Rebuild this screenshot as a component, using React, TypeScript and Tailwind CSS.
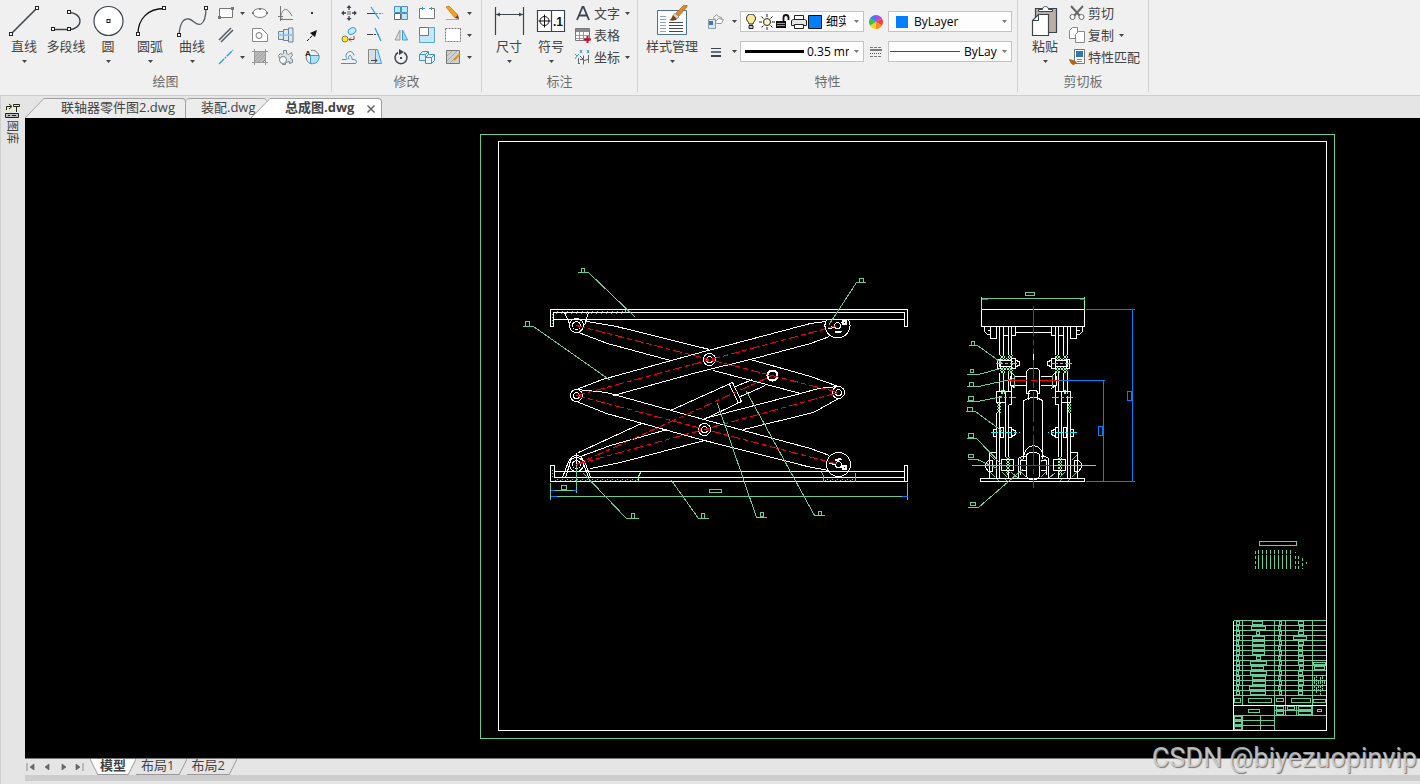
import type { ReactNode } from "react";

const INK = "#3c4450";
const BLUE = "#3a9bdc";
const GREEN = "#66cc99";

function Caret() {
  return (
    <svg width="5" height="3" viewBox="0 0 5 3" className="shrink-0" aria-hidden="true">
      <path d="M0 0h5L2.5 3z" fill="#444" />
    </svg>
  );
}

function Icon({ size = 16, children }: { size?: number; children: ReactNode }) {
  return (
    <svg
      width={size}
      height={size}
      viewBox={`0 0 ${size} ${size}`}
      fill="none"
      stroke={INK}
      className="shrink-0"
      aria-hidden="true"
    >
      {children}
    </svg>
  );
}

function Grip({ x, y }: { x: number; y: number }) {
  return <rect x={x - 1.5} y={y - 1.5} width="3" height="3" fill="#fff" stroke="#222" />;
}

const big = {
  line: (
    <Icon size={32}>
      <path d="M3.5 28.5l25-25" strokeWidth="1.6" />
      <Grip x={3} y={29} />
      <Grip x={29} y={3} />
    </Icon>
  ),
  polyline: (
    <Icon size={32}>
      <path d="M3 24.5h16c6 0 11-3.5 11-8.500s-5-8.500-11-8.500" strokeWidth="1.3" />
      <Grip x={3} y={24} />
      <Grip x={19} y={24} />
      <Grip x={19} y={7} />
    </Icon>
  ),
  circle: (
    <Icon size={32}>
      <circle cx="16.5" cy="16" r="14.5" fill="#fff" strokeWidth="1.2" />
      <Grip x={16.5} y={16} />
    </Icon>
  ),
  arc: (
    <Icon size={32}>
      <path d="M4 29C4 14 14 3.5 30 3.5" stroke="#111" strokeWidth="1.3" />
      <Grip x={4} y={29} />
      <Grip x={30} y={3} />
    </Icon>
  ),
  spline: (
    <Icon size={32}>
      <path d="M3 30C4 17 8 13 13 14c5 1 7 7 12 5 4-2 5-9 5-17" stroke="#555b66" strokeWidth="1.3" />
      <Grip x={3} y={30} />
      <Grip x={30} y={3} />
    </Icon>
  ),
  dimension: (
    <Icon size={32}>
      <path d="M2.5 2v28M30.5 2v28M3 9.5h27" strokeWidth="1.2" />
      <path d="M3 9.5l4-2v4zM30 9.5l-4-2v4z" fill={INK} stroke="none" />
    </Icon>
  ),
  symbol: (
    <Icon size={32}>
      <path d="M2.5 5.5h27v21h-27zM16.5 5.5v21" fill="#fff" strokeWidth="1.2" />
      <circle cx="9.5" cy="16" r="4.5" stroke="#111" />
      <path d="M3.5 16h12M9.5 9.5v13" stroke="#111" />
      <text x="18" y="21" fontSize="12" fontWeight="700" fontFamily="Liberation Sans" fill="#111" stroke="none">
        .1
      </text>
    </Icon>
  ),
  styles: (
    <Icon size={32}>
      <path d="M1.5 5.5h29v24h-29z" fill="#fff" stroke="#4f7190" />
      <path d="M4 11.5h6M4 14.5h6M4 17.5h6M4 20.5h6M4 23.5h6M4 26.5h6" stroke="#8fa5b8" />
      <path d="M13 17.5h14M13 20.5h14M13 23.5h14M13 26.5h14" stroke="#3e4c5a" />
      <path d="M28 0h3v2L22 12l-3-3z" fill="#d98a2b" stroke="#a0601c" strokeWidth=".6" />
      <path d="M19 8l4 4-3 2-3-3z" fill="#d5d5d5" stroke="#777" strokeWidth=".6" />
      <path d="M17 10l4 4c-2 2-5 2-8 1 2 0 3-3 4-5z" fill="#7a4517" stroke="none" />
    </Icon>
  ),
  paste: (
    <Icon size={32}>
      <path d="M6.5 3.5h21v24h-21z" fill="#b7b0a3" strokeWidth="1.2" />
      <path d="M9.5 4.5h4c0-4 6-4 6 0h4v2h-14z" fill="#fff" />
      <path d="M9.5 9.5h10v21h-16v-15z" fill="#fff" strokeWidth="1.2" />
      <path d="M9.5 9.5v6h-6" />
    </Icon>
  ),
};

const draw = {
  rect: (
    <Icon>
      <path d="M1.5 3.5h13v9h-13z" fill="#fff" stroke="#777" />
      <path d="M0 11h3v3H0zM13 2h3v3h-3z" fill="#777" stroke="none" />
    </Icon>
  ),
  ellipse: (
    <Icon>
      <ellipse cx="8" cy="8" rx="7" ry="4.5" fill="#fff" stroke="#777" />
      <path d="M0 7h2v2H0zM14 7h2v2h-2zM7 3h2v2H7z" fill="#777" stroke="none" />
    </Icon>
  ),
  plot: (
    <Icon>
      <path d="M2.5 1v13.5H15M0 11.5h5" stroke="#777" />
      <path d="M2.5 12C5 2 9 2 14 11" stroke="#777" />
      <path d="M2.5 14v2M2.5 12l3 3" stroke="#777" />
    </Icon>
  ),
  point: (
    <Icon>
      <path d="M7 7h2v2H7z" fill="#333" stroke="none" />
    </Icon>
  ),
  parallel: (
    <Icon>
      <path d="M1 13L13 1M3 15L15 3" stroke="#555b66" strokeWidth="1.5" />
    </Icon>
  ),
  contour: (
    <Icon>
      <path d="M.5 1.5h9l6 6v7H.5z" fill="#fff" stroke="#888" />
      <circle cx="7" cy="8.5" r="3" stroke="#777" />
    </Icon>
  ),
  shaft: (
    <Icon>
      <path d="M.5 4.5h5v8h-5zM5.5 2.5h5v11h-5zM10.5 1h4.5v14h-4.5z" fill="#dfe6ee" stroke="#6e8296" />
      <path d="M0 8h16" stroke="#7cc4f0" strokeWidth="1.5" />
    </Icon>
  ),
  arrow: (
    <Icon>
      <path d="M3 14l6-6" stroke="#111" strokeDasharray="3 1" />
      <path d="M13 3l-2 7-5-4z" fill="#111" stroke="none" />
    </Icon>
  ),
  center: (
    <Icon>
      <path d="M1 15L15 1" stroke="#1e9fe0" strokeWidth="1.3" strokeDasharray="7 1 2 1" />
    </Icon>
  ),
  hatch: (
    <Icon>
      <path d="M2.5 2.5h11v8l-3 3h-8z" fill="#b9b9b9" stroke="#777" />
      <path d="M0 2.5h16M2.5 0v16M13.5 0v16M0 13.5h16" stroke="#999" />
      <path d="M3 8l5-5M3 12l9-9M6 13l7-7" stroke="#a4a4a4" />
    </Icon>
  ),
  gear: (
    <Icon>
      <path
        d="M1.5 9l-1-2.500 2-2 2 1 1-1v-3h3v3l2 1 3-2 1 3-2 2v1l2 1v3l-3 1v-2l-4 1v2h-3z"
        fill="#dde1e6"
        stroke="#7c8794"
      />
      <circle cx="5" cy="11" r="3.5" fill="#fff" stroke="#7c8794" />
    </Icon>
  ),
  region: (
    <Icon>
      <path d="M2.5 6a7 7 0 0 0 5 9" stroke="#777" />
      <path d="M6.5 6.5h8.500c1 5-3 9-8.500 8z" fill="#aee0f8" stroke={BLUE} />
      <text x="1" y="7" fontSize="8" fontWeight="700" fontFamily="Liberation Sans" fill="#222" stroke="none">
        A
      </text>
      <path d="M7 1.5c4-1 7 2 8 5" stroke="#777" />
    </Icon>
  ),
};

const edit = {
  move: (
    <Icon>
      <path d="M6 6h4v4H6z" fill="#aaa" stroke="none" />
      <path d="M8 2v3M8 11v3M2 8h3M11 8h3" strokeWidth="1.3" />
      <path d="M8 0l2.5 3h-5zM8 16l2.5-3h-5zM0 8l3-2.5v5zM16 8l-3-2.5v5z" fill={INK} stroke="none" />
    </Icon>
  ),
  trim: (
    <Icon>
      <path d="M0 8.5h8" />
      <path d="M9 8.5h7" stroke={BLUE} strokeDasharray="2 1" />
      <path d="M4 2l8 12" stroke={BLUE} strokeWidth="1.3" />
    </Icon>
  ),
  array: (
    <Icon>
      <path d="M1.5 1.5h6v6h-6zM8.5 1.5h6v6h-6zM8.5 8.5h6v6h-6z" fill="#bfe6fa" stroke="#4793bf" />
      <path d="M1.5 8.5h6v6h-6z" fill="#fff" stroke="#666" />
    </Icon>
  ),
  stretch: (
    <Icon>
      <path d="M3 3.5H.5v10h15v-10H13" fill="#fff" stroke="#777" />
      <path d="M3.5 2v3M12.5 2v3M3 3.500h3M10 3.500h3" stroke={BLUE} />
    </Icon>
  ),
  erase: (
    <Icon>
      <path d="M1 2l3-1 9 9-3 3z" fill="#f0a31c" stroke="#b8700f" strokeWidth=".7" />
      <path d="M10 13l3-3 1 4z" fill="#6b3a1b" stroke="none" />
      <path d="M1 14.5h13" stroke="#b9a48a" />
    </Icon>
  ),
  copy: (
    <Icon>
      <ellipse cx="11" cy="4" rx="4" ry="3" fill="#c9eafc" stroke={BLUE} transform="rotate(-30 11 4)" />
      <path d="M13 9v3.500H8M10 10.500l-2 2 2 2" stroke="#a33" />
      <circle cx="4" cy="12" r="3" fill="#ffee00" stroke="#777" />
    </Icon>
  ),
  extend: (
    <Icon>
      <path d="M0 7.5h4M10 7.5h2" />
      <path d="M4 7.5h6" strokeDasharray="2 1" />
      <path d="M8 1l6 13" stroke={BLUE} strokeWidth="1.3" />
    </Icon>
  ),
  mirror: (
    <Icon>
      <path d="M7 3v10H2z" fill="#ddd" stroke="#999" />
      <path d="M9.5 3v10h5z" fill="#a9dcf7" stroke={BLUE} />
    </Icon>
  ),
  scale: (
    <Icon>
      <path d="M.5.5h15v15H.5z" fill="#c2e7fa" stroke="#5aa6cf" />
      <path d="M.5.5h9v8h-9z" fill="#fff" stroke="#777" />
    </Icon>
  ),
  frame: (
    <Icon>
      <path d="M.5 1.5h15v13H.5z" fill="#fff" stroke="#777" strokeDasharray="2 1" />
    </Icon>
  ),
  offset: (
    <Icon>
      <path d="M1 10.5h4c2 0 0-2 0-4s2-4 4-4 4 2 4 4" stroke="#4793bf" />
      <path d="M0 14.5h14c2 0 2-4-1-4h-2c0-3-1-4-2-4s-2 1-1 4" stroke="#4793bf" />
    </Icon>
  ),
  chamfer: (
    <Icon>
      <path d="M1.5.5h7v14h-7z" fill="#ddd" stroke="#888" />
      <path d="M8.5.5h2l4 14h-6z" fill="#c2e7fa" stroke={BLUE} />
      <path d="M4 11.5h6l-2-2m2 2l-2 2" />
    </Icon>
  ),
  rotate: (
    <Icon>
      <path d="M5 3.5a6 6 0 1 0 6 0" strokeWidth="1.5" />
      <path d="M6 0l5 3-5 3z" fill={INK} stroke="none" />
      <path d="M7 8h2v2H7z" fill={INK} stroke="none" />
    </Icon>
  ),
  block: (
    <Icon>
      <path d="M.5 5.5l3-3h6v6l-3 3h-6zM.5 5.500h6v6m0-6l3-3" fill="#d8effb" stroke="#4793bf" />
      <path d="M6.5 8.5l3-3h6v6l-3 3h-6z" fill="#e9f6fd" stroke="#4793bf" />
      <path d="M6.5 8.5h6v6m0-6l3-3" stroke="#4793bf" />
    </Icon>
  ),
  edhatch: (
    <Icon>
      <path d="M1.5 1.5h13v13h-13z" fill="#d0d0d0" stroke="#777" />
      <path d="M2 7l5-5M2 12l10-10M5 14l9-9" stroke="#aaa" />
      <path d="M15 5l-6 6" stroke="#d9962b" strokeWidth="2" />
    </Icon>
  ),
};

const annotate = {
  text: (
    <Icon>
      <path d="M2 15L7.500 2h1L14 15M4 10.5h8" strokeWidth="1.8" />
    </Icon>
  ),
  table: (
    <Icon>
      <path d="M.5 1.5h14v12H.5z" fill="#fff" stroke="#777" />
      <path d="M1 2h13v3H1z" fill="#8a8a8a" stroke="none" />
      <path d="M.5 8.5h14M.5 11.5h14M4.5 5v8M8.5 5v8" stroke="#999" />
      <path d="M12.5 9v7M9 12.5h7" stroke="#c8102e" strokeWidth="2" />
    </Icon>
  ),
  coord: (
    <Icon>
      <path d="M3.5 9v6M5 10.5h3M8.5 6.5v9M13.5 6v8M8 12l6-2M3 14.500h2M5 7l3 3" stroke="#666" />
      <path d="M5 1l2 3m0-3L5 4M12 1l2 3m0-3l-2 3M0 5l2 2-2 3M2 7l2-2" stroke={BLUE} />
    </Icon>
  ),
};

const clip = {
  cut: (
    <Icon>
      <path d="M2 1l9 10M14 1L5 11" stroke="#666" strokeWidth="2" />
      <circle cx="3.5" cy="12" r="2.5" fill="#fff" stroke="#666" />
      <circle cx="12.5" cy="12" r="2.5" fill="#fff" stroke="#666" />
    </Icon>
  ),
  copy: (
    <Icon>
      <path d="M.5 3.5l3-3h5v11h-8z" fill="#fff" stroke="#888" />
      <path d="M6.5 7.5l3-3h6v11h-9z" fill="#fff" stroke="#888" />
    </Icon>
  ),
  match: (
    <Icon>
      <path d="M5.5.5h10v14h-10z" fill="#fff" stroke="#777" />
      <path d="M7 2h7v6H7z" fill="#2f77b5" stroke="none" />
      <path d="M8 10.5h5M8 12.5h5" stroke="#888" />
      <path d="M0 10l4 1 4 2-3 3c-2 0-4-2-5-6z" fill="#b0651d" stroke="none" />
    </Icon>
  ),
};

function BigButton({ icon, label, caret = true, wide = false }: { icon: ReactNode; label: string; caret?: boolean; wide?: boolean }) {
  return (
    <button type="button" className={`flex shrink-0 flex-col items-center pt-[5px] ${wide ? "w-[58px]" : "w-[42px]"}`}>
      {icon}
      <span className="h-5 whitespace-nowrap leading-[18px]">{label}</span>
      <span className="flex h-2 items-center">{caret && <Caret />}</span>
    </button>
  );
}

function Tool({ icon, label, caret = false, start = false }: { icon: ReactNode; label: string; caret?: boolean; start?: boolean }) {
  return (
    <button
      type="button"
      aria-label={label}
      className={`flex h-[22px] items-center gap-[6px] ${start ? "justify-start pl-[5px]" : "justify-center"}`}
    >
      {icon}
      {caret && <Caret />}
    </button>
  );
}

function RowButton({ icon, label, caret = false }: { icon: ReactNode; label: string; caret?: boolean }) {
  return (
    <button type="button" className="flex h-[22px] items-center gap-[3px] pl-[3px]">
      {icon}
      <span className="whitespace-nowrap pb-px leading-4">{label}</span>
      {caret && <span className="pl-[2px]"><Caret /></span>}
    </button>
  );
}

function Group({ title, className, children }: { title: string; className: string; children: ReactNode }) {
  return (
    <section className="flex shrink-0 flex-col border-r border-[#d2d2d2]">
      <div className={`flex h-[71px] items-start ${className}`}>{children}</div>
      <h2 className="h-5 text-center leading-5 text-[#6d6d6d]">{title}</h2>
    </section>
  );
}

function Picker({ label, value, before, grow = "flex-1" }: { label: string; value: string; before: ReactNode; grow?: string }) {
  return (
    <div className="flex h-[21px] w-[124px] items-center border border-[#c3c3c3] bg-[#fdfdfd] text-xs text-black">
      {before}
      <select aria-label={label} defaultValue={value} className={`min-w-0 appearance-none overflow-hidden bg-transparent ${grow}`}>
        <option>{value}</option>
      </select>
      <span className="ml-auto px-1 opacity-70">
        <Caret />
      </span>
    </div>
  );
}

function Ribbon() {
  return (
    <header className="flex h-24 overflow-hidden border-b border-[#cdcdcd] bg-[#f0f0f0] pb-[3px]">
      <Group title="绘图" className="w-[331px] pl-[3px]">
        <BigButton icon={big.line} label="直线" />
        <BigButton icon={big.polyline} label="多段线" caret={false} />
        <BigButton icon={big.circle} label="圆" />
        <BigButton icon={big.arc} label="圆弧" />
        <BigButton icon={big.spline} label="曲线" />
        <div className="grid grid-cols-[34px_26px_26px_26px] pt-[2px]">
          <Tool icon={draw.rect} label="矩形" caret start />
          <Tool icon={draw.ellipse} label="椭圆" />
          <Tool icon={draw.plot} label="公式曲线" />
          <Tool icon={draw.point} label="点" />
          <Tool icon={draw.parallel} label="平行线" start />
          <Tool icon={draw.contour} label="轮廓" />
          <Tool icon={draw.shaft} label="轴" />
          <Tool icon={draw.arrow} label="箭头" />
          <Tool icon={draw.center} label="中心线" caret start />
          <Tool icon={draw.hatch} label="剖面线" />
          <Tool icon={draw.gear} label="齿形" />
          <Tool icon={draw.region} label="局部放大" />
        </div>
      </Group>

      <Group title="修改" className="w-[149px] pl-1">
        <div className="grid grid-cols-[26px_26px_26px_26px_34px] pt-[2px]">
          <Tool icon={edit.move} label="平移" />
          <Tool icon={edit.trim} label="裁剪" />
          <Tool icon={edit.array} label="阵列" />
          <Tool icon={edit.stretch} label="拉伸" />
          <Tool icon={edit.erase} label="删除" caret start />
          <Tool icon={edit.copy} label="平移复制" />
          <Tool icon={edit.extend} label="延伸" />
          <Tool icon={edit.mirror} label="镜像" />
          <Tool icon={edit.scale} label="缩放" />
          <Tool icon={edit.frame} label="分解" caret start />
          <Tool icon={edit.offset} label="等距线" />
          <Tool icon={edit.chamfer} label="过渡" />
          <Tool icon={edit.rotate} label="旋转" />
          <Tool icon={edit.block} label="块" />
          <Tool icon={edit.edhatch} label="编辑填充" caret start />
        </div>
      </Group>

      <Group title="标注" className="w-[155px] pl-[6px]">
        <BigButton icon={big.dimension} label="尺寸" />
        <BigButton icon={big.symbol} label="符号" />
        <div className="flex flex-col pt-[2px]">
          <RowButton icon={annotate.text} label="文字" caret />
          <RowButton icon={annotate.table} label="表格" />
          <RowButton icon={annotate.coord} label="坐标" caret />
        </div>
      </Group>

      <Group title="特性" className="w-[379px] pl-[5px]">
        <BigButton icon={big.styles} label="样式管理" wide />
        <div className="grid grid-cols-[39px_124px_24px_124px] items-center gap-y-[9px] pt-[11px]">
          <button type="button" aria-label="图层" className="flex items-center gap-2 pl-[7px]">
            <Icon>
              <path d="M5.5 3.5l3-3 2 2 3 1-1 4h-5z" fill="#eee" stroke="#999" />
              <path d="M7.5 7.5l3-3 5 1-2 4h-5z" fill="#fff" stroke="#999" />
              <path d="M.5 5.5h7v9h-7z" fill="#dfe6ec" stroke="#8a9aaa" />
              <path d="M1 7h4v4H1z" fill="#3f79ad" stroke="none" />
            </Icon>
            <Caret />
          </button>
          <Picker
            label="图层"
            value="细实线"
            grow="ml-[3px] w-5"
            before={
              <span className="flex pl-[2px]">
                <Icon>
                  <path d="M6 10c0-2-2.5-3-2.5-5.5a4.5 4.5 0 0 1 9 0C12.5 7 10 8 10 10z" fill="#ffe9a0" stroke="#222" />
                  <path d="M6 11.5h4v3H6z" fill="#ccc" stroke="#222" />
                </Icon>
                <Icon>
                  <circle cx="8" cy="8" r="3.5" fill="#fff3cc" stroke="#222" />
                  <path d="M8 0v3M8 13v3M0 8h3M13 8h3M2.5 2.5l2 2M11.5 11.5l2 2M2.5 13.5l2-2M11.5 4.5l2-2" stroke="#222" />
                </Icon>
                <Icon>
                  <path d="M8.5 7V3.5a2.5 2.5 0 0 1 5 0V6" stroke="#111" strokeWidth="1.8" />
                  <path d="M1 7h10v7H1z" fill="#111" stroke="none" />
                  <path d="M2 9.5h8M2 11.5h8" stroke="#b8a800" />
                </Icon>
                <Icon>
                  <path d="M3.5 6V1.5h9V6" fill="#fff" stroke="#222" />
                  <path d="M.5 6.5l2-1h11l2 1v5H.5z" fill="#e6e6e6" stroke="#222" />
                  <path d="M3.5 10.5h9v4h-9z" fill="#fff" stroke="#222" />
                </Icon>
                <Icon>
                  <path d="M1.5 1.5h13v13h-13z" fill="#0080ff" stroke="#111" />
                </Icon>
              </span>
            }
          />
          <span className="flex justify-center">
            <Icon size={14}>
              <g stroke="none">
                <path d="M7 7V0a7 7 0 0 1 6 3.5z" fill="#b14be8" />
                <path d="M7 7l6-3.5a7 7 0 0 1 0 7z" fill="#f0443a" />
                <path d="M7 7l6 3.5A7 7 0 0 1 7 14z" fill="#f58f1e" />
                <path d="M7 7v7a7 7 0 0 1-6-3.5z" fill="#f2d21c" />
                <path d="M7 7l-6 3.5a7 7 0 0 1 0-7z" fill="#3fbf3f" />
                <path d="M7 7L1 3.5A7 7 0 0 1 7 0z" fill="#3d7fe8" />
              </g>
            </Icon>
          </span>
          <Picker label="颜色" value="ByLayer" before={<span className="mr-[6px] ml-[7px] size-3 shrink-0 bg-[#0080ff]" />} />
          <button type="button" aria-label="线宽" className="flex items-center gap-2 pl-[7px]">
            <Icon>
              <path d="M3 4.5h10" />
              <path d="M3 8h10" strokeWidth="1.5" />
              <path d="M3 12h10" strokeWidth="2" />
            </Icon>
            <Caret />
          </button>
          <Picker
            label="线宽"
            value="0.35 mm"
            grow="w-[42px]"
            before={<span className="mr-[3px] ml-1 h-[3px] w-[59px] shrink-0 bg-black" />}
          />
          <span className="flex justify-center">
            <Icon size={14}>
              <path d="M1 2.5h12M1 11.5h12" strokeDasharray="3 1" stroke="#777" />
              <path d="M1 5h12" stroke="#555" strokeWidth="1.5" />
              <path d="M1 8.5h12" stroke="#555" strokeDasharray="1 1" />
            </Icon>
          </span>
          <Picker
            label="线型"
            value="ByLayer"
            grow="w-[33px]"
            before={<span className="mr-1 ml-px h-px w-[70px] shrink-0 bg-[#ff0000]" />}
          />
        </div>
      </Group>

      <Group title="剪切板" className="w-[130px] pl-[6px]">
        <BigButton icon={big.paste} label="粘贴" />
        <div className="flex flex-col pt-[2px]">
          <RowButton icon={clip.cut} label="剪切" />
          <RowButton icon={clip.copy} label="复制" caret />
          <RowButton icon={clip.match} label="特性匹配" />
        </div>
      </Group>
    </header>
  );
}

function Slope({ fill }: { fill: string }) {
  return (
    <svg width="20" height="20" viewBox="0 0 20 20" className="shrink-0" aria-hidden="true">
      <path d="M0 20L19 .5h1V20z" fill={fill} />
      <path d="M0 20L19 .5h1" fill="none" stroke="#a0a0a0" />
    </svg>
  );
}

function FileTabs() {
  return (
    <nav className="flex h-[22px] items-end overflow-hidden">
      <button type="button" className="flex h-5 shrink-0">
        <Slope fill="#ececec" />
        <span className="h-5 w-[141px] rounded-tr-sm border-t border-r border-[#a0a0a0] bg-[#ececec] pl-4 text-left leading-4">
          联轴器零件图2.dwg
        </span>
      </button>
      <button
        type="button"
        className="flex h-5 w-[81px] shrink-0 rounded-t-sm border-t border-[#a0a0a0] bg-[#ececec] pl-[15px] leading-4"
      >
        装配.dwg
      </button>
      <div className="relative -ml-4 flex h-5 shrink-0">
        <Slope fill="#ffffff" />
        <div className="flex h-5 w-[111px] items-start justify-between rounded-tr-sm border-t border-r border-[#a0a0a0] bg-white pr-[6px] pl-[14px]">
          <button type="button" className="font-bold leading-4">总成图.dwg</button>
          <button type="button" aria-label="关闭" className="pt-[6px]">
            <svg width="8" height="8" viewBox="0 0 8 8" stroke="#666" strokeWidth="1.5" aria-hidden="true">
              <path d="M.5.5l7 7M7.5.5l-7 7" />
            </svg>
          </button>
        </div>
      </div>
    </nav>
  );
}

type Box = [number, number, number, number];

// leader polyline + the little balloon number drawn as a box
const leaders: { d: string; box: Box }[] = [
  { d: "M577 272h11L635 317", box: [581, 268, 3, 4] },
  { d: "M522 326h11L610 380", box: [525, 321, 4, 5] },
  { d: "M583 473L626 518h12", box: [631, 513, 3, 5] },
  { d: "M671 480L698 518h10", box: [701, 513, 3, 5] },
  { d: "M717 403L756 517h10", box: [760, 512, 3, 4] },
  { d: "M746 391L814 515h10", box: [818, 511, 3, 4] },
  { d: "M828 325L856 282h9", box: [859, 278, 4, 4] },
  { d: "M968 345h9L1002 363", box: [971, 341, 3, 4] },
  { d: "M966 374h12L1000 368", box: [970, 369, 3, 3] },
  { d: "M966 386h12L1014 378", box: [969, 382, 4, 4] },
  { d: "M966 401h11L1002 396", box: [968, 396, 5, 4] },
  { d: "M965 411h10L1002 431", box: [967, 407, 5, 4] },
  { d: "M966 438h10L1003 466", box: [968, 433, 5, 4] },
  { d: "M967 459h10L997 468", box: [968, 454, 5, 3] },
  { d: "M967 507h11L1023 468", box: [970, 502, 5, 3] },
];

function Leaders() {
  return (
    <g stroke={GREEN}>
      {leaders.map(({ d, box: [x, y, w, h] }) => (
        <g key={d}>
          <path d={d} />
          <rect x={x} y={y} width={w} height={h} />
        </g>
      ))}
    </g>
  );
}

function FrontView() {
  const pins: [number, number, number][] = [
    [576, 325, 7],
    [576, 395, 6],
    [709, 359, 6],
    [704, 429, 6],
    [838, 392, 6],
    [576, 464, 7],
  ];
  return (
    <g>
      <g fill="url(#slant)">
        <rect x="553" y="310" width="72" height="3" />
        <rect x="553" y="478" width="85" height="3" />
        <rect x="823" y="478" width="32" height="3" />
        <rect x="551" y="312" width="3" height="13" />
        <rect x="551" y="467" width="3" height="10" />
      </g>
      <g stroke="#fff">
        <path d="M550 309H907V326H904V312H553V326H550zM553 319H904" />
        <path d="M550 481H907V465H904V477H554V465H550zM554 471H904M904 477V481" />
        <path d="M564 312l5 11M588 312l-4 13M562 477l6-16 4-5q4-2 8 0l5 7 5 14M565 477l5-16M588 477l-5-14" />
        <path d="M586 321L616 326L709 349M750 359L810 376L838 386M578 332L607 343L670 360M713 370L800 393" />
        <path d="M576 389L602 379L700 352L810 323L825 321M613 395L700 371L750 359L810 343L829 336" />
        <path d="M576 389L606 392L743 430L810 448L829 455M576 401L606 413L700 439L807 466L828 470" />
        <path d="M580 456L610 445L667 429M704 418L800 393L818 388L838 386M590 468L620 462L704 440M743 429L813 412L838 398" />
        <path d="M578 452L641 423M670 410L732 382L741 401L703 419M729 384L738 403M735 386L752 379M740 396L765 385" />
        <path d="M826 319A12.5 12.5 0 1 0 848 319" />
        <circle cx="838" cy="464" r="12" />
        <circle cx="772" cy="375" r="5" strokeWidth="2" />
        {pins.map(([x, y, r]) => (
          <g key={`${x}-${y}`}>
            <circle cx={x} cy={y} r={r} />
            <circle cx={x} cy={y} r={r - 3} />
          </g>
        ))}
        <circle cx="837" cy="325" r="3" />
        <circle cx="844" cy="322" r="2" strokeWidth="2" />
        <path d="M828 328l6-2M835 331l6 1" strokeWidth="2" />
        <circle cx="838" cy="464" r="3" />
        <circle cx="844" cy="467" r="2" strokeWidth="2" />
        <path d="M829 462l6 2M835 460l6-2" strokeWidth="2" />
        <path d="M576 452V465" />
      </g>
      <g stroke="#f00" strokeDasharray="9 3 5 3">
        <path d="M576 325L838 392" />
        <path d="M576 395L837 325" />
        <path d="M576 395L838 464" />
        <path d="M576 464L838 392" />
        <path d="M576 464L772 375" />
      </g>
      <g stroke={GREEN}>
        <path d="M821 472l2 3v6M855 472v9" />
        <path d="M638 481v-5l2-4M625 309v3" stroke="#80ff99" />
        <path d="M576 464V492M550 482V499M907 482V499M550 496H907M550 490H576" />
        <rect x="561" y="485" width="5" height="4" />
        <rect x="709" y="489" width="12" height="3" />
      </g>
      <path d="M550 490h4M572 490h4M550 496h6M901 496h6" stroke="#0080ff" />
    </g>
  );
}

// one half of the side elevation, drawn again mirrored about the centre line
function SideHalf() {
  return (
    <g>
      <g fill="url(#hatch)" stroke="none">
        <rect x="999" y="354" width="5" height="18" />
        <rect x="1004" y="357" width="3" height="12" />
        <rect x="1007" y="354" width="5" height="18" />
        <rect x="999" y="389" width="5" height="4" />
        <rect x="996" y="402" width="4" height="10" />
        <rect x="1005" y="456" width="4" height="18" />
      </g>
      <path
        d="M990 455l5 5M990 472l5 5M1002 472l5 5M1011 472l7 6M1021 472l5 5M996 478l3 3M1004 478l3 3M1020 458l5 3"
        stroke={GREEN}
      />
      <g stroke="#fff">
        <path d="M984 326v5l3 3h3M987 330h3M990 326V338H996V326M1003 326v9h5M1011 335h4v-9M1015 332H1033" />
        <path d="M999 326V354M1003 326V354M1008 326V354M1011 326V354M999 372V391M1003 372V391M1008 372V391M1011 372V380" />
        <path d="M996 412V474M999 395V474M1005 391V456M1008 404V456" />
        <rect x="999" y="360" width="12" height="6" fill="#000" />
        <path d="M997 359h3v9h-3zM1011 358h4v10h-4zM1015 360l4 1v4l-4 1" />
        <path d="M1011 372l4 4H1026M1010 375V385H1026M1011 385l4 3M1011 385v19h-3" />
        <path d="M996 391h9v11h-9zM1005 391h6" />
        <path d="M993 429h3v7h-3zM1000 427h3v10h-3zM1008 427h3v10h-3zM1011 429l4 1v4l-4 2" />
        <path d="M989 478V452H996V478M985 463l3-3h4v11h-4l-3-4zM1001 459h12v11h-12zM999 471V478M1008 471v7" />
        <path d="M1018 478V458l3-2h5M1020 459V474M1020 460h6M1020 470h6" />
      </g>
      <path d="M995 363h23M994 397h21M990 432h29" stroke="#0ff" strokeDasharray="7 2 3 2" />
      <path d="M971 465h42" stroke="#0ff" />
      <path d="M1014 374V387" stroke={GREEN} />
    </g>
  );
}

function SideView() {
  return (
    <g>
      <SideHalf />
      <g transform="translate(2066 0) scale(-1 1)">
        <SideHalf />
      </g>
      <g stroke="#fff">
        <path d="M981 309H1084V326H981zM980 478H1084V481H980z" />
        <path d="M1026 393V371q2-3 4-3h6q3 0 3 3v22M1028 399V391q5-3 9 0v8M1026 393h3M1037 393h2" />
        <path d="M1023 458V400l5-2q5-2 10 0l4 2V458" />
        <path d="M1023 456q2-10 10-11q8 1 10 11" />
        <path d="M1026 476V454q7-5 13 0v22l-3 3h-7z" />
      </g>
      <path d="M1033 305V487" stroke="#f00" strokeDasharray="30 4 5 4" />
      <path d="M1033 353v6" stroke="#fff" />
      <path d="M1006 380H1026M1030 380h6M1039 380H1058M1014 465H1052" stroke="#f00" />
      <g stroke={GREEN}>
        <path d="M981 298H1084" />
        <path d="M981 296V309M1084 296V309" stroke="#80ff99" />
        <rect x="1025" y="292" width="9" height="3" />
      </g>
      <g stroke="#0080ff">
        <path d="M981 299h6M1079 299h5M1085 309H1134M1132 309V481M1058 380H1104M1103 380V481M1085 481H1134" />
        <rect x="1098" y="426" width="4" height="9" />
        <rect x="1127" y="391" width="4" height="9" />
      </g>
    </g>
  );
}

// text cells of the parts list, as x offset and width per row
const nameCells: [number, number][] = [
  [1252, 10], [1251, 14], [1256, 3], [1252, 12], [1252, 12], [1252, 12], [1252, 12], [1256, 4],
  [1250, 16], [1251, 12], [1250, 16], [1252, 13], [1252, 13], [1249, 16], [1250, 15],
];
const materialCells: [number, number][] = [
  [1298, 5], [1299, 4], [1298, 5], [1293, 13], [1298, 5], [1298, 4], [1298, 4], [1298, 5],
  [1298, 5], [1299, 4], [1298, 4], [1298, 5], [1298, 5], [1298, 4], [1298, 4],
];

function TitleBlock() {
  return (
    <g stroke={GREEN}>
      <rect x="1259" y="541" width="37" height="4" />
      <path d="M1255 550v18" strokeDasharray="3 2" />
      <path d="M1258 549v19M1262 549v19M1266 549v19M1270 549v19M1274 549v19M1278 549v19M1282 549v19M1286 549v19M1290 549v19" strokeDasharray="4 1 14" />
      <path d="M1295 555v13M1298 555v13M1302 557v11M1294 552h1M1306 561v2" strokeDasharray="3 2" />

      {nameCells.map(([x, w], i) => (
        <g key={i}>
          <path d={`M1233 ${620 + i * 5}H1326`} />
          <rect x="1236" y={621 + i * 5} width={i % 3 === 1 ? 2 : 3} height="3" />
          <rect x={x} y={621 + i * 5} width={w} height="3" />
          <rect x={i % 2 ? 1278 : 1279} y={621 + i * 5} width="2" height="3" />
          <rect x={materialCells[i][0]} y={621 + i * 5} width={materialCells[i][1]} height="3" />
        </g>
      ))}
      <path d="M1233 695H1326M1242 620V705M1274 620V730M1285 620V705M1312 620V715M1233 715H1326M1233 720H1274M1233 725H1274M1242 715V730M1260 715V730M1274 710H1312M1285 705V715M1296 705V715" />
      <path d="M1314 676v14M1316 674v18M1318 680v10M1320 676v18M1322 675v14M1324 680v4" strokeDasharray="3 1" />
      <rect x="1313" y="662" width="12" height="2" />
      <rect x="1314" y="666" width="10" height="3" />
      <rect x="1234" y="698" width="6" height="4" />
      <rect x="1248" y="698" width="23" height="4" />
      <rect x="1276" y="698" width="7" height="3" />
      <rect x="1291" y="698" width="19" height="4" />
      <rect x="1313" y="699" width="12" height="3" />
      <rect x="1248" y="709" width="11" height="3" />
      <rect x="1276" y="706" width="7" height="3" />
      <rect x="1276" y="711" width="7" height="3" />
      <rect x="1287" y="706" width="7" height="3" />
      <rect x="1298" y="706" width="13" height="3" />
      <rect x="1298" y="711" width="13" height="3" />
      <rect x="1317" y="709" width="4" height="2" />
      <rect x="1234" y="716" width="7" height="3" />
      <rect x="1234" y="721" width="7" height="3" />
      <rect x="1234" y="726" width="7" height="3" />
      <path d="M1233 620V730M1233 705H1326" stroke="#fff" />
    </g>
  );
}

function Drawing() {
  return (
    <svg
      viewBox="25 118 1395 640"
      className="block h-auto w-full"
      fill="none"
      shapeRendering="crispEdges"
      role="img"
      aria-label="总成图"
    >
      <defs>
        <pattern id="hatch" width="3" height="3" patternUnits="userSpaceOnUse" patternTransform="translate(-.5 -.5)">
          <path d="M0 0h1v1H0zM1 1h1v1H1zM2 2h1v1H2zM2 0h1v1H2zM0 2h1v1H0z" fill="#80ff99" />
        </pattern>
        <pattern id="slant" width="5" height="3" patternUnits="userSpaceOnUse" patternTransform="translate(-.5 -.5)">
          <path d="M0 0h1v1H0zM1 1h1v1H1zM2 2h1v1H2z" fill={GREEN} />
        </pattern>
      </defs>
      <g transform="translate(.5 .5)">
        <rect x="480" y="134" width="854" height="604" stroke={GREEN} />
        <FrontView />
        <SideView />
        <Leaders />
        <TitleBlock />
        <rect x="498" y="141" width="828" height="589" stroke="#fff" />
      </g>
    </svg>
  );
}

function Slash() {
  return (
    <svg width="8" height="16" viewBox="0 0 8 16" className="shrink-0" aria-hidden="true">
      <path d="M8 0L0 16" stroke="#999" />
    </svg>
  );
}

const navArrows = [
  { label: "第一个", d: "M1 1v8M8 2L4 5l4 3z" },
  { label: "上一个", d: "M7 2L3 5l4 3z" },
  { label: "下一个", d: "M4 2l4 3-4 3z" },
  { label: "最后一个", d: "M2 2l4 3-4 3zM9 1v8" },
];

function LayoutTabs() {
  return (
    <footer className="pb-[3px]">
      <nav className="flex h-[17px] border-t border-[#777]">
        <div className="flex items-center pl-px">
          {navArrows.map(({ label, d }) => (
            <button key={label} type="button" aria-label={label} className="flex w-4">
              <svg width="10" height="10" viewBox="0 0 10 10" aria-hidden="true">
                <path d={d} fill="#666" stroke="#666" strokeWidth=".7" />
              </svg>
            </button>
          ))}
        </div>
        <button type="button" className="flex shrink-0">
          <svg width="8" height="16" viewBox="0 0 8 16" className="shrink-0" aria-hidden="true">
            <path d="M0 0h8v16z" fill="#fff" />
            <path d="M0 0l8 16" stroke="#999" />
          </svg>
          <span className="h-4 border-b border-[#999] bg-white px-[2px] font-bold leading-3">模型</span>
          <svg width="8" height="16" viewBox="0 0 8 16" className="shrink-0" aria-hidden="true">
            <path d="M0 0h8L0 16z" fill="#fff" />
            <path d="M8 0L0 16" stroke="#999" />
          </svg>
        </button>
        <button type="button" className="flex h-4 shrink-0 border-b border-[#999] px-[5px] leading-3">布局1</button>
        <Slash />
        <button type="button" className="flex h-4 shrink-0 border-b border-[#999] px-1 leading-3">布局2</button>
        <Slash />
      </nav>
      <div className="h-[6px] bg-[#cdcdcd]" />
    </footer>
  );
}

export default function App() {
  return (
    <div className="relative flex min-h-screen flex-col overflow-hidden bg-[#e5e5e5] font-['Open_Sans','Noto_Sans_CJK_SC',sans-serif] text-[13px] text-[#444]">
      <Ribbon />
      <div className="flex flex-1">
        <aside className="w-[25px] shrink-0 border-l border-[#d0d0d0] pt-[7px]">
          <button type="button" className="flex w-[22px] flex-col items-center">
            <Icon>
              <path d="M1 0h14v9H1z" fill="#e8ebd0" stroke="none" />
              <path d="M2.5 7V3.5H7M5 1l3 2.5L5 6M9.5 1.5h6v2h-6zM12.5 4v5" stroke="#222" />
              <path d="M1.5 10.5h13v4h-13z" fill="#bbb" stroke="#222" />
              <path d="M4 12.5h2M8 12.5h4" stroke="#222" />
            </Icon>
            <span className="pt-px text-xs leading-4 [text-orientation:sideways] [writing-mode:vertical-rl]">图库</span>
          </button>
        </aside>
        <main className="flex min-w-0 flex-1 flex-col">
          <FileTabs />
          <div className="flex-1 bg-black">
            <Drawing />
          </div>
          <LayoutTabs />
        </main>
      </div>
      <p className="pointer-events-none absolute right-[3px] bottom-[10px] font-[Roboto,sans-serif] text-[27px] leading-8 text-[#d8d8d8]/80 [text-shadow:1px_1px_1px_#777]">
        CSDN @biyezuopinvip
      </p>
    </div>
  );
}
